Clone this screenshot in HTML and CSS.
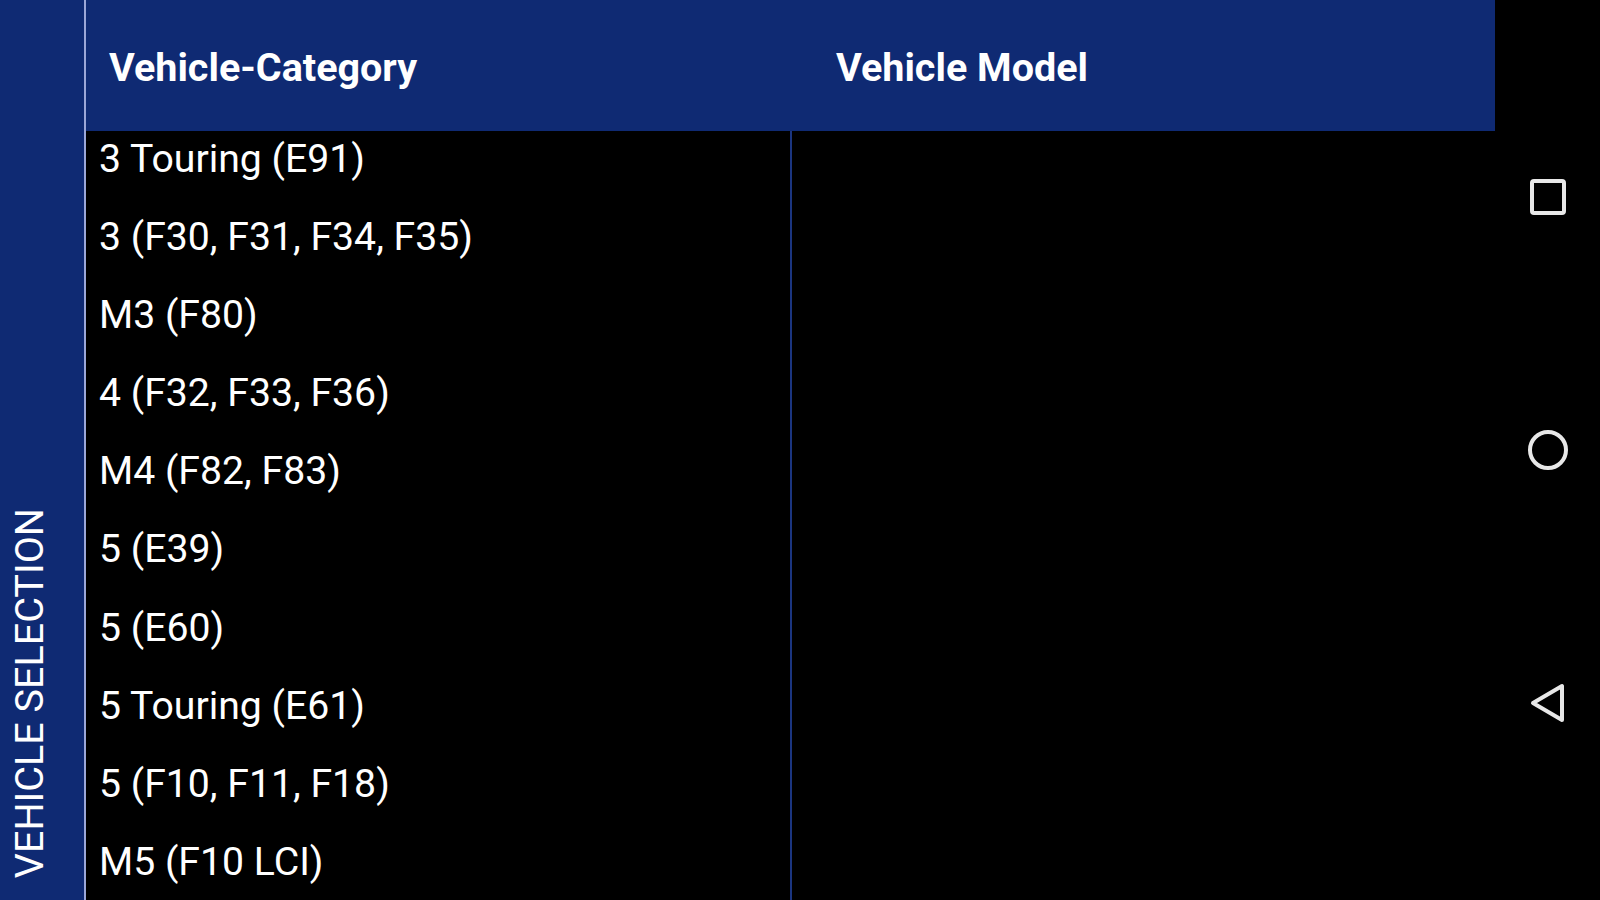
FILE: index.html
```html
<!DOCTYPE html>
<html>
    <head>
        <meta http-equiv="Content-Type" content="text/html; charset=utf-8"/>
        <title>Vehicle Selection</title>
        <link rel="stylesheet" href="styles.css">
    </head>
    <body>
        <div class="screen">
            <div class="sidebar">
                <span class="sidebar-title">VEHICLE SELECTION</span>
            </div>
            <div class="main">
                <div class="header">
                    <div class="head-col head-category">Vehicle-Category</div>
                    <div class="head-col head-model">Vehicle Model</div>
                </div>
                <div class="body">
                    <ul class="list">
                        <li>3 Touring (E91)</li>
                        <li>3 (F30, F31, F34, F35)</li>
                        <li>M3 (F80)</li>
                        <li>4 (F32, F33, F36)</li>
                        <li>M4 (F82, F83)</li>
                        <li>5 (E39)</li>
                        <li>5 (E60)</li>
                        <li>5 Touring (E61)</li>
                        <li>5 (F10, F11, F18)</li>
                        <li>M5 (F10 LCI)</li>
                    </ul>
                    <div class="divider"></div>
                    <div class="models"></div>
                </div>
            </div>
            <div class="navbar">
                <svg class="nav-icon" width="44" height="44" viewBox="0 0 44 44">
                    <rect x="6" y="6" width="32" height="32" rx="2" fill="none" stroke="#e8e8e8" stroke-width="4"/>
                </svg>
                <svg class="nav-icon" width="44" height="44" viewBox="0 0 44 44">
                    <circle cx="22" cy="22" r="18" fill="none" stroke="#e8e8e8" stroke-width="4"/>
                </svg>
                <svg class="nav-icon" width="44" height="44" viewBox="0 0 44 44">
                    <path d="M7 22 L36 5 L36 39 Z" fill="none" stroke="#e8e8e8" stroke-width="4" stroke-linejoin="round"/>
                </svg>
            </div>
        </div>
    </body>
</html>
```

FILE: styles.css
```css
html, body {
    margin: 0;
    padding: 0;
    background-color: #000;
}
body {
    font-family: Roboto, "Liberation Sans", sans-serif;
    color: #fff;
    overflow: hidden;
}
.screen {
    display: flex;
    width: 1600px;
    height: 900px;
}
.sidebar {
    width: 74px;
    flex: none;
    background-color: #0f2a73;
    border-right: 2px solid #9ba7d8;
    display: flex;
    flex-direction: column;
    justify-content: flex-end;
    align-items: flex-start;
    padding: 0 0 22px 10px;
    height: 878px;
}
.sidebar-title {
    writing-mode: vertical-rl;
    transform: rotate(180deg);
    font-size: 39.5px;
    line-height: 40px;
}
.main {
    width: 1409px;
    flex: none;
    display: flex;
    flex-direction: column;
}
.header {
    height: 131px;
    flex: none;
    background-color: #0f2a73;
    display: flex;
    align-items: center;
}
.head-col {
    font-size: 39.5px;
    font-weight: bold;
    padding-top: 4px;
}
.head-category {
    width: 704px;
    box-sizing: border-box;
    padding-left: 23px;
}
.head-model {
    padding-left: 46px;
}
.body {
    flex: 1;
    display: flex;
}
.list {
    list-style: none;
    margin: 0;
    padding: 2px 0 0 0;
    width: 704px;
    flex: none;
}
.list li {
    font-size: 39.2px;
    line-height: 52px;
    height: 52px;
    padding: 0 0 26.1px 13px;
    white-space: nowrap;
}
.divider {
    width: 2px;
    flex: none;
    background-color: #1b3580;
}
.models {
    flex: 1;
}
.navbar {
    flex: 1;
    display: flex;
    flex-direction: column;
    align-items: center;
    justify-content: center;
    gap: 209px;
}
.nav-icon {
    display: block;
}
```
